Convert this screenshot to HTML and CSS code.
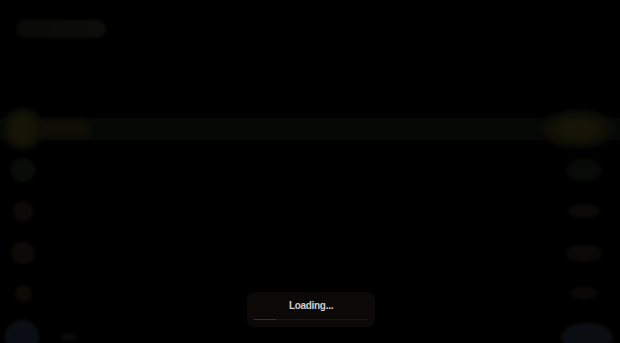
FILE: index.html
```html
<!DOCTYPE html>
<html>
<head>
<meta charset="utf-8">
<link rel="stylesheet" href="styles.css">
</head>
<body>
<div class="page">
  <div class="top-pill"></div>
  <div class="band">
    <div class="band-left">
      <div class="glow-circle"></div>
      <div class="glow-pill"></div>
    </div>
    <div class="glow-oval"></div>
  </div>
  <div class="rows">
    <div class="row r1"><span class="l"></span><span class="r"></span></div>
    <div class="row r2"><span class="l"></span><span class="r"></span></div>
    <div class="row r3"><span class="l"></span><span class="r"></span></div>
    <div class="row r4"><span class="l"></span><span class="r"></span></div>
    <div class="row r5"><span class="l"></span><span class="mini"></span><span class="spacer"></span><span class="r"></span></div>
  </div>
</div>
<div class="loading">
  <div class="loading-text">Loading...</div>
  <div class="bar"><div class="bar-fill"></div></div>
</div>
</body>
</html>
```
FILE: styles.css
```css
html, body {
  margin: 0;
  padding: 0;
  background: #000;
  width: 620px;
  height: 343px;
  overflow: hidden;
  font-family: "Liberation Sans", "DejaVu Sans", sans-serif;
}
.page {
  display: flex;
  flex-direction: column;
}
.top-pill {
  margin: 20px 0 0 16px;
  width: 90px;
  height: 18px;
  border-radius: 9px;
  background: linear-gradient(90deg, #090907, #0c0c0a);
  filter: blur(1.5px);
}
.band {
  margin-top: 80px;
  height: 22px;
  background: #050805;
  display: flex;
  align-items: center;
  justify-content: space-between;
}
.band-left {
  display: flex;
  align-items: center;
}
.glow-circle {
  width: 42px;
  height: 42px;
  margin-left: 2px;
  border-radius: 50%;
  background: radial-gradient(circle, #161406 0, #161406 38%, #0c0d06 60%, #060806 85%, rgba(5,8,5,0) 100%);
  filter: blur(2px);
}
.glow-pill {
  width: 56px;
  height: 18px;
  margin-left: -8px;
  border-radius: 9px;
  background: #0f0e06;
  filter: blur(3px);
}
.glow-oval {
  width: 76px;
  height: 38px;
  margin-right: 4px;
  border-radius: 50%;
  background: radial-gradient(ellipse, #161406 0, #161406 30%, #0d0d06 55%, #070906 80%, rgba(5,8,5,0) 100%);
  filter: blur(2px);
}
.rows {
  display: flex;
  flex-direction: column;
}
.row {
  display: flex;
  align-items: center;
  justify-content: space-between;
  padding: 0 18px 0 11px;
}
.row span {
  display: block;
  border-radius: 50%;
  filter: blur(1.5px);
}
.r1 { margin-top: 18px; height: 24px; }
.r1 .l { width: 24px; height: 24px; background: #080c08; }
.r1 .r { width: 36px; height: 22px; background: #070a07; }
.r2 { margin-top: 19px; height: 20px; }
.r2 .l { width: 20px; height: 20px; margin-left: 2px; background: #0c0a07; }
.r2 .r { width: 32px; height: 14px; margin-right: 2px; background: #0a0907; }
.r3 { margin-top: 20px; height: 24px; }
.r3 .l { width: 24px; height: 22px; background: #0c0a07; }
.r3 .r { width: 36px; height: 17px; background: #0a0907; }
.r4 { margin-top: 19px; height: 18px; }
.r4 .l { width: 17px; height: 17px; margin-left: 4px; background: #0c0a05; }
.r4 .r { width: 28px; height: 12px; margin-right: 4px; background: #0b0905; }
.r5 { margin-top: 17px; height: 36px; padding-left: 5px; padding-right: 7px; }
.r5 .l { width: 34px; height: 34px; background: #0a0d13; }
.r5 .mini { width: 16px; height: 7px; margin-left: 22px; background: #0b0b0b; }
.r5 .spacer { flex: 1; filter: none; }
.r5 .r { width: 52px; height: 28px; background: #0a0d12; }
.loading {
  position: absolute;
  left: 247px;
  top: 292px;
  width: 128px;
  height: 35px;
  box-sizing: border-box;
  padding: 7px 6px 0;
  border-radius: 7px;
  background: #0a0908;
  display: flex;
  flex-direction: column;
  align-items: stretch;
}
.loading-text {
  text-align: center;
  color: #cfcfcf;
  font-size: 10px;
  font-weight: bold;
  line-height: 13px;
  letter-spacing: -0.3px;
}
.bar {
  margin-top: 7px;
  height: 1px;
  background: #12191c;
  margin-left: 1px;
  margin-right: 1px;
}
.bar-fill {
  width: 22px;
  height: 1px;
  background: #1d3a40;
}
```
